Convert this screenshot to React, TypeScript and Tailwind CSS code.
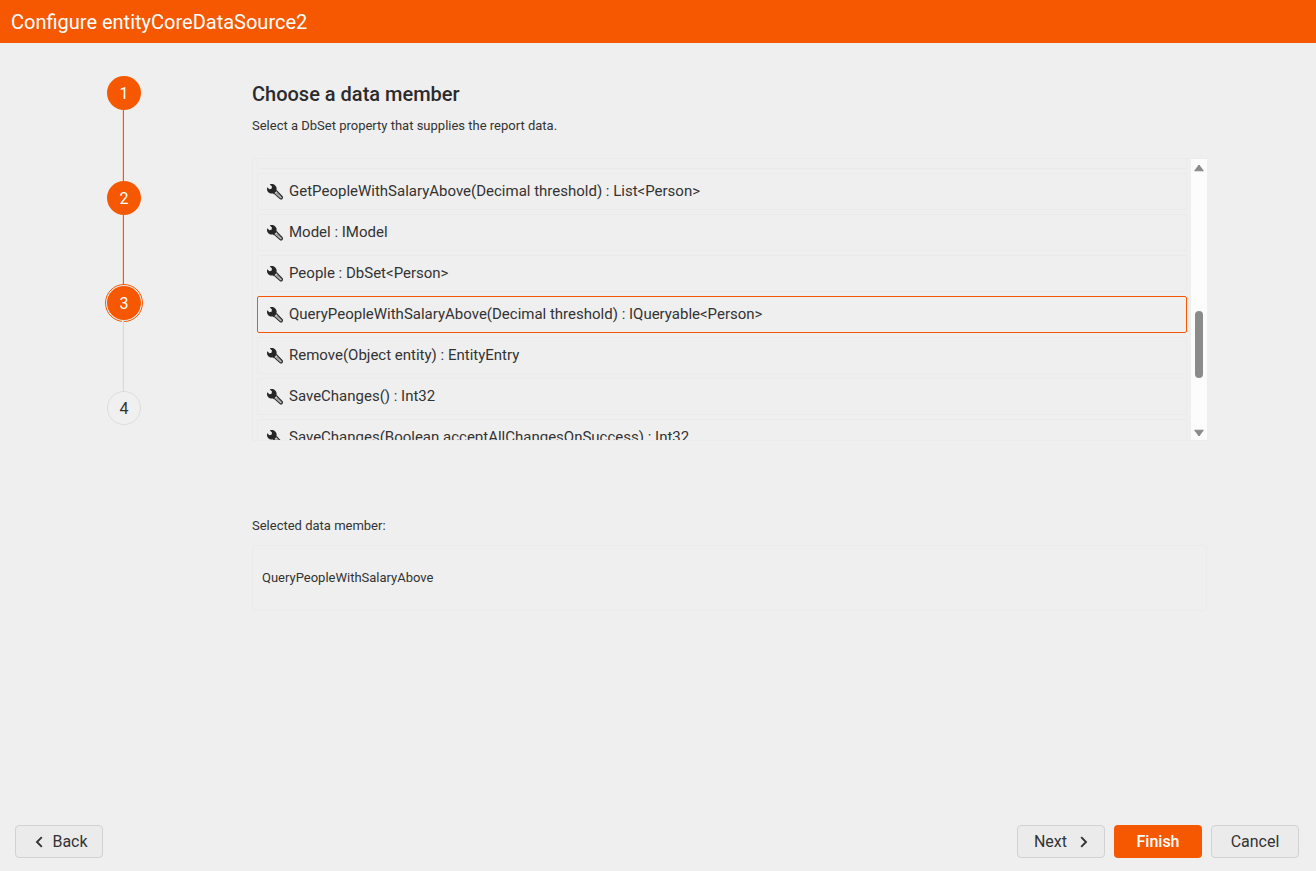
import React, { useState } from "react";

const steps = [1, 2, 3, 4];
const currentStep = 3;

const members = [
  { name: "GetPeopleWithSalaryAbove", label: "GetPeopleWithSalaryAbove(Decimal threshold) : List<Person>" },
  { name: "Model", label: "Model : IModel" },
  { name: "People", label: "People : DbSet<Person>" },
  { name: "QueryPeopleWithSalaryAbove", label: "QueryPeopleWithSalaryAbove(Decimal threshold) : IQueryable<Person>" },
  { name: "Remove", label: "Remove(Object entity) : EntityEntry" },
  { name: "SaveChanges", label: "SaveChanges() : Int32" },
  { name: "SaveChanges2", label: "SaveChanges(Boolean acceptAllChangesOnSuccess) : Int32" },
];

function WrenchIcon() {
  return (
    <svg className="size-4 shrink-0" viewBox="0 0 16 16" aria-hidden="true">
      <path
        fill="#262626"
        d="M2.800.4C4.500-.2 6.800.1 8.200 1.500 9.500 2.700 9.900 4.300 9.500 5.900L10.400 6.900 6.900 10.300 5.900 9.400C4.200 9.900 2.500 9.400 1.300 8.200.1 7-.3 5 .3 3.200L2.400 5.200 4.500 4.700 5 2.500Z"
      />
      <path
        fill="#cfcfcf"
        stroke="#2b2b2b"
        strokeWidth="1.200"
        strokeLinejoin="round"
        d="M9.700 6.800 15 12.500C15.500 13.100 15.500 13.900 15 14.500 14.500 15.100 13.700 15.100 13.100 14.600L7.200 9.400"
      />
      <path stroke="#444" strokeWidth="1" strokeDasharray="1 0.800" d="M9.500 9 13.800 13.300" />
    </svg>
  );
}

function Chevron({ d }: { d: string }) {
  return (
    <svg className="h-3 w-2" viewBox="0 0 8 12" aria-hidden="true">
      <path d={d} fill="none" stroke="#333" strokeWidth="1.900" />
    </svg>
  );
}

const plainButton =
  "flex h-[33px] w-[88px] items-center justify-center rounded-[4px] border border-[#d2d2d2] bg-[#ebebeb] text-[#333]";

export default function App() {
  const [selected, setSelected] = useState("QueryPeopleWithSalaryAbove");

  return (
    <div className="flex min-h-screen flex-col bg-[#efefef] font-['Roboto',sans-serif] text-base text-[#333]">
      <header className="flex h-[43px] items-center bg-[#f55800] px-[11px]">
        <h1 className="text-xl text-white">Configure entityCoreDataSource2</h1>
      </header>

      <div className="flex flex-1">
        <nav aria-label="Wizard steps" className="flex w-[248px] shrink-0 flex-col items-center pt-[33px]">
          {steps.map((step) => (
            <React.Fragment key={step}>
              {step > 1 && (
                <span
                  className={`-ml-[2px] h-[71px] w-[2px] border-l ${
                    step <= currentStep ? "border-[#f6d3c0] bg-[#f55800]" : "border-[#ebebeb] bg-[#d8d8d8]"
                  }`}
                />
              )}
              <button
                type="button"
                aria-current={step === currentStep ? "step" : undefined}
                className={`flex size-[34px] items-center justify-center rounded-full pt-px ${
                  step <= currentStep ? "bg-[#f55800] text-white" : "border border-[#dddddd] bg-[#f0f0f0] text-[#333]"
                } ${step === currentStep ? "outline outline-[#f55800] ring-1 ring-[#efefef] outline-offset-1" : ""}`}
              >
                {step}
              </button>
            </React.Fragment>
          ))}
        </nav>

        <main className="mr-[109px] ml-1 flex min-w-0 flex-1 flex-col pt-9">
          <h2 className="text-xl leading-[30px] font-medium text-[#2b2b2b]">Choose a data member</h2>
          <p className="mt-[7px] text-[13px] leading-5">Select a DbSet property that supplies the report data.</p>

          <div className="mt-[22px] flex h-[283px] border border-r-0 border-[#ebebeb]">
            <div role="listbox" aria-label="Data members" className="flex flex-1 flex-col gap-1 overflow-hidden px-1">
              <div className="h-[10px] shrink-0 rounded-b-[2px] border border-t-0 border-[#ebebeb]" />
              {members.map((member) => (
                <button
                  key={member.name}
                  type="button"
                  role="option"
                  aria-selected={selected === member.name}
                  onClick={() => setSelected(member.name)}
                  className={`flex h-[37px] shrink-0 items-center gap-[6px] rounded-[2px] border px-[9px] text-left text-[15px] ${
                    selected === member.name ? "border-[#f55800]" : "border-[#ebebeb]"
                  }`}
                >
                  <WrenchIcon />
                  {member.label}
                </button>
              ))}
            </div>
            <div className="flex w-4 flex-col items-center bg-[#fcfcfc] pt-[5px] pb-[3px]" aria-hidden="true">
              <svg className="h-2 w-[10px]" viewBox="0 0 10 8">
                <path d="M5 1 9.300 6.800H.7Z" fill="#8b8b8b" stroke="#8b8b8b" strokeLinejoin="round" />
              </svg>
              <div className="mt-[139px] h-[67px] w-2 rounded-full bg-[#8b8b8b]" />
              <svg className="mt-auto h-2 w-[10px]" viewBox="0 0 10 8">
                <path d="M.7 1.200H9.300L5 7Z" fill="#8b8b8b" stroke="#8b8b8b" strokeLinejoin="round" />
              </svg>
            </div>
          </div>

          <p className="mt-[75px] text-[13px] leading-5">Selected data member:</p>
          <output className="mt-[9px] flex h-[66px] items-center rounded-[3px] border border-[#ebebeb] px-[9px] text-[13px]">
            {selected}
          </output>
        </main>
      </div>

      <footer className="flex gap-[9px] pr-[17px] pb-[13px] pl-[15px]">
        <button type="button" className={`${plainButton} mr-auto gap-[9px] pl-[5px]`}>
          <Chevron d="M6.800 1.200 2 6 6.800 10.800" />
          Back
        </button>
        <button type="button" className={`${plainButton} gap-[13px]`}>
          Next
          <Chevron d="M1.200 1.200 6 6 1.200 10.800" />
        </button>
        <button
          type="button"
          className="flex h-[33px] w-[88px] items-center justify-center rounded-[4px] bg-[#f55800] font-medium text-white"
        >
          Finish
        </button>
        <button type="button" className={plainButton}>
          Cancel
        </button>
      </footer>
    </div>
  );
}
